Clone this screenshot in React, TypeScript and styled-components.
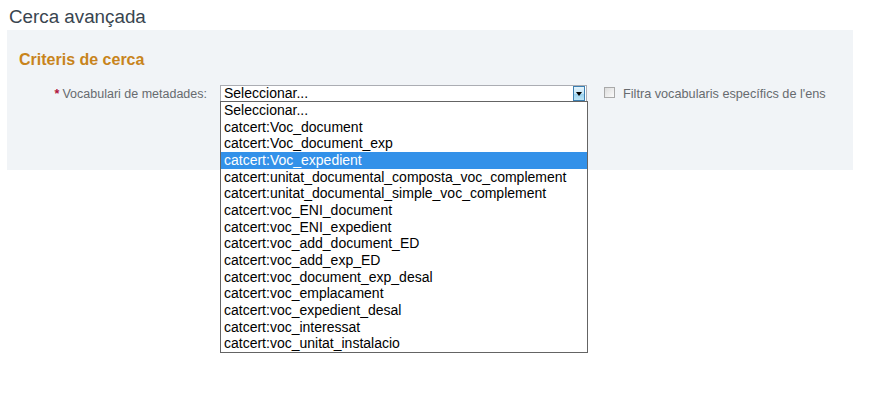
import styled, { createGlobalStyle } from 'styled-components';

const GlobalStyle = createGlobalStyle`
  html, body {
    margin: 0;
    padding: 0;
    background: #ffffff;
  }
  body {
    font-family: "Liberation Sans", Arial, sans-serif;
  }
`;

const options = [
  'Seleccionar...',
  'catcert:Voc_document',
  'catcert:Voc_document_exp',
  'catcert:Voc_expedient',
  'catcert:unitat_documental_composta_voc_complement',
  'catcert:unitat_documental_simple_voc_complement',
  'catcert:voc_ENI_document',
  'catcert:voc_ENI_expedient',
  'catcert:voc_add_document_ED',
  'catcert:voc_add_exp_ED',
  'catcert:voc_document_exp_desal',
  'catcert:voc_emplacament',
  'catcert:voc_expedient_desal',
  'catcert:voc_interessat',
  'catcert:voc_unitat_instalacio',
];

const Page = styled.div`
  width: 846px;
  min-height: 402px;
  margin-left: 7px;
  overflow: visible;
`;

const PageTitle = styled.h1`
  margin: 5px 0 2px 2px;
  font-size: 18.8px;
  line-height: 23px;
  font-weight: 400;
  color: #39454f;
`;

const Panel = styled.div`
  background: #f1f4f7;
  height: 140px;
  padding: 20px 0 0 12px;
  box-sizing: border-box;
`;

const SectionTitle = styled.h2`
  margin: 0 0 15px;
  font-size: 16px;
  line-height: 20px;
  font-weight: 700;
  color: #c8841c;
`;

const Row = styled.div`
  display: flex;
  align-items: center;
  height: 17px;
`;

const Label = styled.label`
  width: 188px;
  text-align: right;
  font-size: 12.5px;
  color: #676b6f;
  white-space: nowrap;
`;

const Required = styled.span`
  color: #b0153b;
  font-weight: 700;
  margin-right: 3px;
`;

const SelectWrap = styled.div`
  position: relative;
  margin-left: 13px;
  width: 367px;
`;

const SelectBox = styled.div`
  box-sizing: border-box;
  height: 17px;
  border: 1px solid #abadb3;
  background: #fff;
  display: flex;
  align-items: center;
  padding-left: 3px;
  font-size: 14px;
  color: #000;
`;

const SelectText = styled.span`
  flex: 1;
  line-height: 15px;
`;

const ArrowButton = styled.span`
  width: 12px;
  height: 15px;
  box-sizing: border-box;
  margin-right: 1px;
  border: 1px solid #3c7fb1;
  background: linear-gradient(#e5f4fc, #c4e5f6 50%, #98d1ef 51%, #bde4f5);
  display: flex;
  align-items: center;
  justify-content: center;
`;

const DropList = styled.ul`
  position: absolute;
  left: 0;
  top: 16px;
  width: 368px;
  box-sizing: border-box;
  margin: 0;
  padding: 0;
  list-style: none;
  background: #fff;
  border: 1px solid #646464;
  z-index: 2;
`;

const Option = styled.li<{ $active?: boolean }>`
  height: 16.67px;
  line-height: 16.67px;
  padding-left: 3px;
  font-size: 14px;
  white-space: nowrap;
  color: ${(p) => (p.$active ? '#ffffff' : '#000000')};
  background: ${(p) => (p.$active ? '#3391e9' : 'transparent')};
`;

const CheckField = styled.label`
  display: flex;
  align-items: center;
  margin-left: 17px;
  font-size: 12.7px;
  color: #676b6f;
`;

const CheckBox = styled.span`
  width: 11px;
  height: 11px;
  box-sizing: border-box;
  border: 1px solid #a9a9a9;
  background: linear-gradient(135deg, #dcdcdc, #fbfbfb);
  margin-right: 8px;
  margin-top: -2px;
`;

export default function App() {
  return (
    <>
      <GlobalStyle />
      <Page>
        <PageTitle>Cerca avançada</PageTitle>
        <Panel>
          <SectionTitle>Criteris de cerca</SectionTitle>
          <Row>
            <Label>
              <Required>*</Required>Vocabulari de metadades:
            </Label>
            <SelectWrap>
              <SelectBox>
                <SelectText>Seleccionar...</SelectText>
                <ArrowButton>
                  <svg width="6" height="4" viewBox="0 0 6 4">
                    <path d="M0 0h6L3 4z" fill="#000" />
                  </svg>
                </ArrowButton>
              </SelectBox>
              <DropList>
                {options.map((o, i) => (
                  <Option key={o} $active={i === 3}>
                    {o}
                  </Option>
                ))}
              </DropList>
            </SelectWrap>
            <CheckField>
              <CheckBox />
              Filtra vocabularis específics de l'ens
            </CheckField>
          </Row>
        </Panel>
      </Page>
    </>
  );
}
